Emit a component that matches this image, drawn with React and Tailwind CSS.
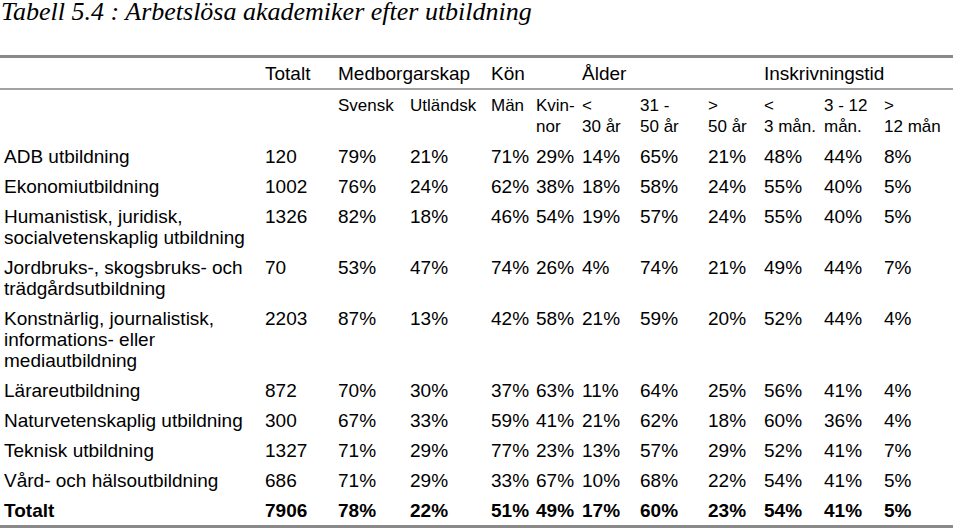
const cols = "grid grid-cols-[261px_73px_72px_81px_45px_46px_58px_68px_56px_60px_60px_1fr]";

const rows = [
  [["ADB utbildning"], "120", "79%", "21%", "71%", "29%", "14%", "65%", "21%", "48%", "44%", "8%"],
  [["Ekonomiutbildning"], "1002", "76%", "24%", "62%", "38%", "18%", "58%", "24%", "55%", "40%", "5%"],
  [["Humanistisk, juridisk,", "socialvetenskaplig utbildning"], "1326", "82%", "18%", "46%", "54%", "19%", "57%", "24%", "55%", "40%", "5%"],
  [["Jordbruks-, skogsbruks- och", "trädgårdsutbildning"], "70", "53%", "47%", "74%", "26%", "4%", "74%", "21%", "49%", "44%", "7%"],
  [["Konstnärlig, journalistisk,", "informations- eller", "mediautbildning"], "2203", "87%", "13%", "42%", "58%", "21%", "59%", "20%", "52%", "44%", "4%"],
  [["Lärareutbildning"], "872", "70%", "30%", "37%", "63%", "11%", "64%", "25%", "56%", "41%", "4%"],
  [["Naturvetenskaplig utbildning"], "300", "67%", "33%", "59%", "41%", "21%", "62%", "18%", "60%", "36%", "4%"],
  [["Teknisk utbildning"], "1327", "71%", "29%", "77%", "23%", "13%", "57%", "29%", "52%", "41%", "7%"],
  [["Vård- och hälsoutbildning"], "686", "71%", "29%", "33%", "67%", "10%", "68%", "22%", "54%", "41%", "5%"],
];

const total = [["Totalt"], "7906", "78%", "22%", "51%", "49%", "17%", "60%", "23%", "54%", "41%", "5%"];

function Row({ cells, bold }) {
  const [label, ...vals] = cells;
  return (
    <div className={`${cols} pl-[4px] py-[4.5px] ${bold ? "font-bold" : ""}`}>
      <div>
        {label.map((l, i) => (
          <div key={i} className="whitespace-nowrap">{l}</div>
        ))}
      </div>
      {vals.map((v, i) => (
        <div key={i} className="whitespace-nowrap">{v}</div>
      ))}
    </div>
  );
}

export default function App() {
  return (
    <div className="w-[960px] h-[529px] bg-white text-black overflow-hidden">
      <div className="h-[55px] pl-[1px]">
        <h1 className="font-['Liberation_Serif',serif] italic text-[26px] leading-[24px]">
          Tabell 5.4 : Arbetslösa akademiker efter utbildning
        </h1>
      </div>

      <div className="w-[953px] font-['Liberation_Sans',Arial,sans-serif] text-[19px] leading-[21px]">
        <div className="h-[3px] bg-[#8a8a8a]" />

        {/* header groups */}
        <div className={`${cols} pl-[4px] h-[30px] items-center`}>
          <div />
          <div>Totalt</div>
          <div className="col-span-2">Medborgarskap</div>
          <div className="col-span-2">Kön</div>
          <div className="col-span-3">Ålder</div>
          <div className="col-span-3">Inskrivningstid</div>
        </div>
        <div className="h-[2px] bg-[#a3a3a3]" />

        {/* sub headers */}
        <div className={`${cols} pl-[4px] py-[4.5px] text-[17px]`}>
          <div />
          <div />
          <div>Svensk</div>
          <div>Utländsk</div>
          <div>Män</div>
          <div>Kvin-<br />nor</div>
          <div>&lt;<br />30 år</div>
          <div>31 -<br />50 år</div>
          <div>&gt;<br />50 år</div>
          <div className="whitespace-nowrap">&lt;<br />3 mån.</div>
          <div className="whitespace-nowrap">3 - 12<br />mån.</div>
          <div className="whitespace-nowrap">&gt;<br />12 mån</div>
        </div>

        {rows.map((r, i) => (
          <Row key={i} cells={r} />
        ))}
        <Row cells={total} bold />
        <div className="h-[3px] bg-[#8a8a8a]" />
      </div>
    </div>
  );
}
